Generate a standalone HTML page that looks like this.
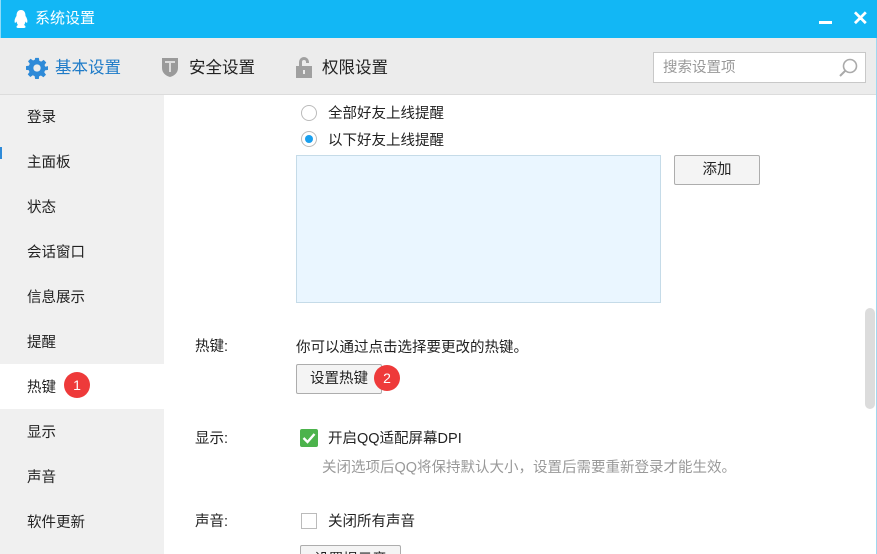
<!DOCTYPE html>
<html><head><meta charset="utf-8"><style>
*{margin:0;padding:0;box-sizing:border-box}
html,body{width:877px;height:554px;overflow:hidden}
body{background:#fff;font-family:"Liberation Sans","Noto Sans CJK SC",sans-serif;font-size:14.5px;color:#222;position:relative}
.abs{position:absolute}
.title{left:0;top:0;width:877px;height:38px;background:#12b7f5;border-left:1px solid #8fdcf9}
.tool{left:0;top:38px;width:877px;height:57px;background:#ececec;border-bottom:1px solid #dcdcdc}
.side{left:0;top:95px;width:164px;height:459px;background:#f0f0f0}
.item{position:absolute;left:27px;font-size:14.5px;color:#222;line-height:20px}
.btn{position:absolute;background:#f4f4f4;border:1px solid #adadad;border-radius:2px;text-align:center;font-size:14.5px;line-height:28px;color:#222}
.badge{position:absolute;width:26px;height:26px;border-radius:13px;background:#ee3a3a;color:#fff;text-align:center;line-height:26px;font-size:14px}
.lbl{position:absolute;left:195px;font-size:14.5px;line-height:20px}
</style></head><body>
<div class="abs title">
 <svg class="abs" style="left:12px;top:9px" width="16" height="20" viewBox="0 0 16 20"><path d="M8 1C4.5 1 3.5 4 3.5 7C2 9 1 12 2 14C3 13.5 3 13 3.5 12.5C4 15 5 16 5 16C3 17 3 19 5 19H11C13 19 13 17 11 16C11 16 12 15 12.5 12.5C13 13 13 13.5 14 14C15 12 14 9 12.5 7C12.5 4 11.5 1 8 1Z" fill="#fff"/></svg>
 <div class="abs" style="left:34px;top:9px;color:#fff;font-size:15px;line-height:20px">系统设置</div>
 <div class="abs" style="left:818px;top:21px;width:13px;height:3px;background:#fff"></div>
 <div class="abs" style="left:851px;top:6px;color:#fff;font-size:20px;font-weight:bold;line-height:26px">✕</div>
</div>
<div class="abs tool">
 <svg class="abs" style="left:26px;top:19px" width="22" height="22" viewBox="0 0 24 24"><path fill="#2e8ad8" d="M10 1h4l.6 3.2 2 .9 2.7-1.9 2.8 2.8-1.9 2.7.9 2L24 10v4l-3.2.6-.9 2 1.9 2.7-2.8 2.8-2.7-1.9-2 .9L14 24h-4l-.6-3.2-2-.9-2.7 1.9-2.8-2.8 1.9-2.7-.9-2L0 14v-4l3.2-.6.9-2L2.2 4.7 5 1.9l2.7 1.9 2-.9z"/><circle cx="12" cy="12" r="4" fill="#ececec"/></svg>
 <div class="abs" style="left:55px;top:19px;font-size:16.5px;color:#1e7bc8;line-height:22px">基本设置</div>
 <svg class="abs" style="left:161px;top:18px" width="18" height="22" viewBox="0 0 18 22"><path d="M1 2h16v10c0 5-4 8-8 9C5 20 1 17 1 12z" fill="#9a9a9a"/><path d="M4 5h10v2h-4v9H8V7H4z" fill="#dcdcdc"/></svg>
 <div class="abs" style="left:189px;top:19px;font-size:16.5px;line-height:22px">安全设置</div>
 <svg class="abs" style="left:294px;top:17px" width="20" height="24" viewBox="0 0 20 24"><path d="M5 11V7a5 5 0 0110 0v1h-3V7a2 2 0 00-4 0v4z" fill="#a0a0a0"/><rect x="2" y="11" width="16" height="12" fill="#a0a0a0"/><rect x="9" y="15" width="2" height="4" fill="#ececec"/></svg>
 <div class="abs" style="left:322px;top:19px;font-size:16.5px;line-height:22px">权限设置</div>
 <div class="abs" style="left:653px;top:14px;width:213px;height:31px;background:#fff;border:1px solid #c8c8c8"></div>
 <div class="abs" style="left:663px;top:20px;color:#999;font-size:14.5px;line-height:20px">搜索设置项</div>
 <svg class="abs" style="left:837px;top:19px" width="22" height="22" viewBox="0 0 22 22"><circle cx="13" cy="9" r="6.5" fill="none" stroke="#aaa" stroke-width="1.6"/><path d="M8.5 13.5L3 19" stroke="#aaa" stroke-width="2"/></svg>
</div>
<div class="abs side"></div>
<div class="abs" style="left:0;top:364px;width:164px;height:45px;background:#fff"></div>
<div class="abs" style="left:0;top:147px;width:2px;height:12px;background:#2e8ad8"></div>
<div class="item" style="top:108px">登录</div>
<div class="item" style="top:153px">主面板</div>
<div class="item" style="top:198px">状态</div>
<div class="item" style="top:243px">会话窗口</div>
<div class="item" style="top:288px">信息展示</div>
<div class="item" style="top:333px">提醒</div>
<div class="item" style="top:378px">热键</div>
<div class="badge" style="left:64px;top:372px">1</div>
<div class="item" style="top:423px">显示</div>
<div class="item" style="top:468px">声音</div>
<div class="item" style="top:513px">软件更新</div>

<div class="abs" style="left:301px;top:105px;width:16px;height:16px;border-radius:8px;border:1px solid #bbb;background:#fff"></div>
<div class="abs" style="left:328px;top:104px;line-height:20px">全部好友上线提醒</div>
<div class="abs" style="left:301px;top:131px;width:16px;height:16px;border-radius:8px;border:1px solid #bbb;background:#fff"><div style="margin:3px;width:8px;height:8px;border-radius:4px;background:#1aa0ee"></div></div>
<div class="abs" style="left:328px;top:131px;line-height:20px">以下好友上线提醒</div>
<div class="abs" style="left:296px;top:155px;width:365px;height:148px;background:#eaf6ff;border:1px solid #c5dbe8"></div>
<div class="btn" style="left:674px;top:155px;width:86px;height:30px">添加</div>

<div class="lbl" style="top:337px">热键:</div>
<div class="abs" style="left:296px;top:338px;line-height:20px">你可以通过点击选择要更改的热键。</div>
<div class="btn" style="left:296px;top:364px;width:86px;height:30px">设置热键</div>
<div class="badge" style="left:374px;top:365px">2</div>

<div class="lbl" style="top:429px">显示:</div>
<div class="abs" style="left:300px;top:429px;width:18px;height:18px;background:#4cb34c;border-radius:2px"><svg width="18" height="18"><path d="M3.5 9l4 4 7-8" stroke="#fff" stroke-width="2.4" fill="none"/></svg></div>
<div class="abs" style="left:328px;top:429px;line-height:20px">开启QQ适配屏幕DPI</div>
<div class="abs" style="left:322px;top:458px;line-height:20px;color:#999">关闭选项后QQ将保持默认大小，设置后需要重新登录才能生效。</div>

<div class="lbl" style="top:512px">声音:</div>
<div class="abs" style="left:301px;top:513px;width:16px;height:16px;border:1px solid #bbb;background:#fff"></div>
<div class="abs" style="left:328px;top:512px;line-height:20px">关闭所有声音</div>
<div class="btn" style="left:300px;top:545px;width:101px;height:30px">设置提示音</div>

<div class="abs" style="left:865px;top:308px;width:10px;height:101px;background:#dcdcdc;border-radius:5px"></div>
<div class="abs" style="left:876px;top:38px;width:1px;height:516px;background:#9fd8ef"></div>
</body></html>
